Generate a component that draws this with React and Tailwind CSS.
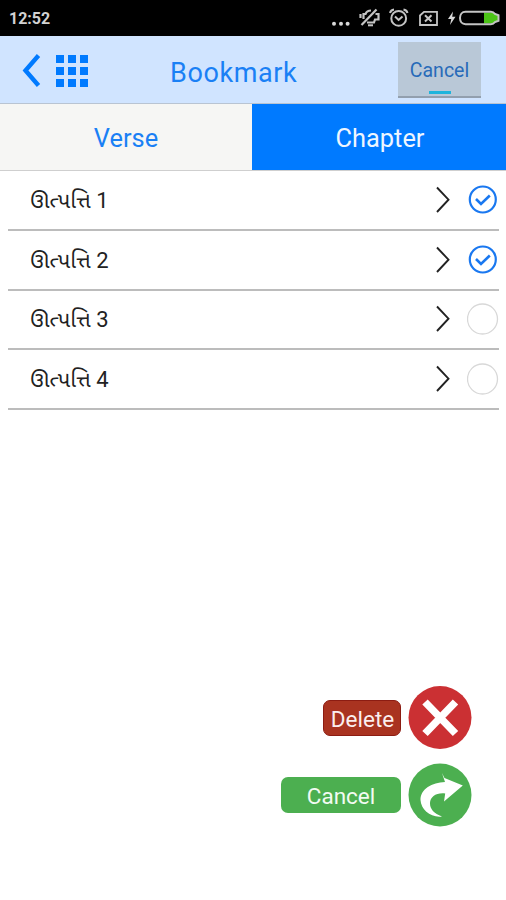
import React, { useState } from 'react';

const verses = [
    { id: 1, book: 'ઊત્પત્તિ', chapter: 1, checked: true },
    { id: 2, book: 'ઊત્પત્તિ', chapter: 2, checked: true },
    { id: 3, book: 'ઊત્પત્તિ', chapter: 3, checked: false },
    { id: 4, book: 'ઊત્પત્તિ', chapter: 4, checked: false },
];

const StatusBar = () => (
    <div className="flex h-9 items-center justify-between bg-black pl-[9px] pr-1">
        <span className="pt-0.5 text-[16px] font-bold leading-none text-[#d2d2d2]">12:52</span>
        {/* dots, silent mode, alarm, no sim, charging battery */}
        <svg width="174" height="36" viewBox="328 0 174 36" fill="none" stroke="#c4c4c4" strokeWidth="1.6">
            <g fill="#d8d8d8" stroke="none">
                <circle cx="334" cy="23.8" r="2" />
                <circle cx="341" cy="23.8" r="2" />
                <circle cx="347.6" cy="23.8" r="2" />
            </g>
            <path d="M360.5 14 V18 M363.5 19 V14 H365.5 C366.5 11.5 368.5 10.5 371 10.5 M375.5 14 H378.5 V19.5 H375 L374 22.5 H367" strokeWidth="2.2" />
            <path d="M368 25.3 H373" strokeWidth="2" />
            <path d="M361.5 25 L376.5 9.5" strokeWidth="2.2" />
            <circle cx="398.7" cy="18.4" r="7.4" strokeWidth="2" />
            <path d="M395 16.5 L398.6 20 L402.5 16.5" strokeWidth="2" />
            <path d="M390 13 C390.5 11 392 9.8 394 9.5 M403.5 9.5 C405.5 9.8 407 11 407.5 13" strokeWidth="2" />
            <path d="M424 11.8 H437 V25 H420 V15.5 Z" strokeWidth="1.8" />
            <path d="M425 15.3 L431.5 21.5 M431.5 15.3 L425 21.5" strokeWidth="2" />
            <path d="M453 11.5 L448 19 H451.3 L450 25 L455.5 16.8 H452.2 Z" fill="#d8d8d8" stroke="none" />
            <path d="M484 12.5 H492 C495 12.5 495.5 15 498 15.5 V20.5 C495.5 21 495 23.5 492 23.5 H484 Z" fill="#4cc417" stroke="none" />
            <path d="M465.5 11.8 H491 C493 11.8 494 12.5 495 14 L498.5 15.2 V20.8 L495 22 C494 23.5 493 24.2 491 24.2 H465.5 C462 24.2 460 21.5 460 18 C460 14.5 462 11.8 465.5 11.8 Z" strokeWidth="2" />
        </svg>
    </div>
);

const Header = () => (
    <header className="flex h-[68px] items-center border-b border-[#b9c4d2] bg-[#d0e4ff] pl-[22px] pr-[25px]">
        <div className="flex w-[148px] items-center gap-[15px] pt-0.5">
            <svg width="19" height="34" viewBox="0 0 19 34" fill="none" stroke="#007aff" strokeWidth="4.4">
                <path d="M16.5 1.5 L3.5 16.5 L16.5 31.5" />
            </svg>
            <div className="grid grid-cols-3 gap-1">
                {Array.from({ length: 9 }, (_, i) => (
                    <span key={i} className="h-2 w-2 bg-[#007aff]" />
                ))}
            </div>
        </div>
        <h1 className="flex-1 pt-1.5 text-[27px] leading-8 tracking-[0.6px] text-[#1a80f5]">Bookmark</h1>
        <button className="flex h-14 w-[83px] flex-col items-center justify-end border-b-2 border-[#929fae] bg-[#b9c8d7]">
            <span className="mb-[8px] text-[19.5px] leading-6 text-[#286bb9]">Cancel</span>
            <span className="mb-[2px] h-[3px] w-[22px] bg-[#1eb4dc]" />
        </button>
    </header>
);

const Check = ({ on }) => (
    <svg width="32" height="32" viewBox="0 0 32 32" fill="none">
        {on ? (
            <g stroke="#1a78f0" strokeWidth="2.2">
                <circle cx="15.8" cy="15.5" r="13" />
                <path d="M9 15 L14 20 L22.8 11.5" strokeWidth="2.6" />
            </g>
        ) : (
            <circle cx="15.5" cy="16" r="15" stroke="#d8d8d8" strokeWidth="1.3" />
        )}
    </svg>
);

const VerseRow = ({ item }) => (
    <li className="flex h-[59.8px] items-center border-b-2 border-[#bcbcbc] pl-[22px]">
        <span className="flex-1 whitespace-pre pt-[2px] text-[22px] leading-none text-[#222222]">
            {item.book} {item.chapter}
        </span>
        <svg width="16" height="28" viewBox="0 0 16 28" className="mr-4" fill="none" stroke="#222222" strokeWidth="1.9">
            <path d="M2 1.5 L13.5 13.7 L2 26" />
        </svg>
        <Check on={item.checked} />
    </li>
);

const App = () => {
    const [tab, setTab] = useState('Chapter');

    return (
        <div className="flex h-[900px] w-[506px] flex-col overflow-hidden bg-white font-[Roboto,'Noto_Sans_Gujarati','Noto_Sans',sans-serif]">
            <StatusBar />
            <Header />

            <div className="grid h-[67px] grid-cols-[252px_254px] border-b border-[#cfcfcf]">
                {['Verse', 'Chapter'].map((name) => (
                    <button
                        key={name}
                        onClick={() => setTab(name)}
                        className={`pt-0.5 text-[25.4px] ${tab === name ? 'bg-[#007aff] pl-0.5 text-[#eef6ff]' : 'bg-[#f6f6f4] text-[#1a80f5]'}`}
                    >
                        {name}
                    </button>
                ))}
            </div>

            <ul className="ml-2 mr-[7px]">
                {verses.map((item) => (
                    <VerseRow key={item.id} item={item} />
                ))}
            </ul>

            {/* Floating actions */}
            <div className="mb-[73px] mr-[34px] mt-auto flex flex-col items-end gap-[14px]">
                <div className="flex items-center gap-[7px]">
                    <button className="mt-px h-[36px] w-[78px] rounded-[7px] border border-[#8c1c12] bg-[#a93320] pl-px pt-[3px] text-[22.5px] leading-none text-[#fbeeee]">Delete</button>
                    <svg width="64" height="64" viewBox="0 0 64 64">
                        <circle cx="32" cy="32.5" r="31.5" fill="#cb3033" />
                        <path d="M17 17 L47.5 48.5 M47.5 17 L17 48.5" stroke="#ffffff" strokeWidth="7.5" />
                    </svg>
                </div>
                <div className="flex items-center gap-[7px]">
                    <button className="h-[36px] w-[120px] rounded-[7px] bg-[#4caf50] pt-[3px] text-[22.5px] leading-none text-[#f2fbf2]">Cancel</button>
                    <svg width="64" height="64" viewBox="0 0 64 64">
                        <circle cx="32" cy="32" r="31.5" fill="#4caf50" />
                        <path d="M34 10 L36.5 15 L54.8 22.5 L36 38.5 L37.2 30.5 C28 29.5 22.3 34 22 40 C21.8 46 26 50.5 34 53.5 C23 55 13 47 12.5 37 C12.5 26 24 19.5 37 19 Z" fill="#ffffff" />
                    </svg>
                </div>
            </div>
        </div>
    );
};

export default App;
